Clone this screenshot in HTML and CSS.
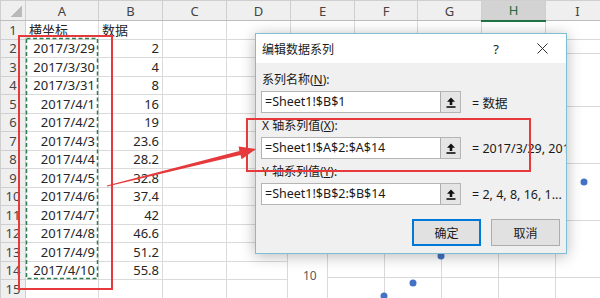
FILE: index.html
```html
<!DOCTYPE html>
<html lang="zh-CN">

<head>
  <meta charset="UTF-8">
  <meta name="viewport" content="width=device-width, initial-scale=1.0">
  <title>编辑数据系列</title>
  <link rel="stylesheet" href="styles.css">
</head>

<body>
  <div class="screen">
    <table class="sheet">
      <colgroup>
        <col class="c-head">
        <col class="c-a">
        <col class="c-std">
        <col class="c-std">
        <col class="c-std">
        <col class="c-std">
        <col class="c-g">
        <col class="c-std">
        <col class="c-std">
        <col class="c-std">
      </colgroup>
      <tr class="col-heads">
        <th class="corner"></th>
        <th>A</th>
        <th>B</th>
        <th>C</th>
        <th>D</th>
        <th>E</th>
        <th>F</th>
        <th>G</th>
        <th class="sel">H</th>
        <th>I</th>
      </tr>
      <tr><th>1</th><td>横坐标</td><td>数据</td><td></td><td></td><td></td><td></td><td></td><td></td><td></td></tr>
      <tr><th>2</th><td class="num">2017/3/29</td><td class="num">2</td><td></td><td></td><td></td><td></td><td></td><td></td><td></td></tr>
      <tr><th>3</th><td class="num">2017/3/30</td><td class="num">4</td><td></td><td></td><td></td><td></td><td></td><td></td><td></td></tr>
      <tr><th>4</th><td class="num">2017/3/31</td><td class="num">8</td><td></td><td></td><td></td><td></td><td></td><td></td><td></td></tr>
      <tr><th>5</th><td class="num">2017/4/1</td><td class="num">16</td><td></td><td></td><td></td><td></td><td></td><td></td><td></td></tr>
      <tr><th>6</th><td class="num">2017/4/2</td><td class="num">19</td><td></td><td></td><td></td><td></td><td></td><td></td><td></td></tr>
      <tr><th>7</th><td class="num">2017/4/3</td><td class="num">23.6</td><td></td><td></td><td></td><td></td><td></td><td></td><td></td></tr>
      <tr><th>8</th><td class="num">2017/4/4</td><td class="num">28.2</td><td></td><td></td><td></td><td></td><td></td><td></td><td></td></tr>
      <tr><th>9</th><td class="num">2017/4/5</td><td class="num">32.8</td><td></td><td></td><td></td><td></td><td></td><td></td><td></td></tr>
      <tr><th>10</th><td class="num">2017/4/6</td><td class="num">37.4</td><td></td><td></td><td></td><td></td><td></td><td></td><td></td></tr>
      <tr><th>11</th><td class="num">2017/4/7</td><td class="num">42</td><td></td><td></td><td></td><td></td><td></td><td></td><td></td></tr>
      <tr><th>12</th><td class="num">2017/4/8</td><td class="num">46.6</td><td></td><td></td><td></td><td></td><td></td><td></td><td></td></tr>
      <tr><th>13</th><td class="num">2017/4/9</td><td class="num">51.2</td><td></td><td></td><td></td><td></td><td></td><td></td><td></td></tr>
      <tr><th>14</th><td class="num">2017/4/10</td><td class="num">55.8</td><td></td><td></td><td></td><td></td><td></td><td></td><td></td></tr>
      <tr><th>15</th><td></td><td></td><td></td><td></td><td></td><td></td><td></td><td></td><td></td></tr>
    </table>

    <!-- 图表（被对话框挡住大半） -->
    <div class="chart">
      <svg class="chart-grid" width="320" height="250" viewBox="0 0 320 250">
        <g stroke="#d9d9d9" stroke-width="1">
          <line x1="39.5" y1="0" x2="39.5" y2="250" />
          <line x1="96.5" y1="0" x2="96.5" y2="250" />
          <line x1="153.5" y1="0" x2="153.5" y2="250" />
          <line x1="210.5" y1="0" x2="210.5" y2="250" />
          <line x1="267.5" y1="0" x2="267.5" y2="250" />
          <line x1="39" y1="52.5" x2="320" y2="52.5" />
          <line x1="39" y1="109.5" x2="320" y2="109.5" />
          <line x1="39" y1="166.5" x2="320" y2="166.5" />
          <line x1="39" y1="223.5" x2="320" y2="223.5" />
        </g>
        <g fill="#4472c4">
          <circle cx="96" cy="242" r="3.5" />
          <circle cx="125" cy="229" r="3.5" />
          <circle cx="153" cy="202" r="3.5" />
          <circle cx="296" cy="128" r="3.5" />
        </g>
      </svg>
      <span class="axis-label">10</span>
    </div>

    <div class="dialog">
      <div class="dlg-title">
        <span class="dlg-name">编辑数据系列</span>
        <span class="dlg-help">?</span>
        <span class="dlg-close">
          <svg width="11" height="11" viewBox="0 0 11 11">
            <path d="M0.5 0.5L10.5 10.5M10.5 0.5L0.5 10.5" stroke="#333" stroke-width="1" fill="none" />
          </svg>
        </span>
      </div>
      <div class="dlg-body">
        <div class="field">
          <label>系列名称(<u>N</u>):</label>
          <div class="field-row">
            <div class="ref-box">
              <span class="ref-text">=Sheet1!$B$1</span>
              <span class="ref-btn">
                <svg width="10" height="11" viewBox="0 0 10 11">
                  <path d="M5 0.5L9 4.8H6.3V8H3.7V4.8H1Z" fill="#111" />
                  <rect x="0.5" y="9.2" width="9" height="1.6" fill="#111" />
                </svg>
              </span>
            </div>
            <span class="ref-value">= 数据</span>
          </div>
        </div>
        <div class="field">
          <label>X 轴系列值(<u>X</u>):</label>
          <div class="field-row">
            <div class="ref-box">
              <span class="ref-text">=Sheet1!$A$2:$A$14</span>
              <span class="ref-btn">
                <svg width="10" height="11" viewBox="0 0 10 11">
                  <path d="M5 0.5L9 4.8H6.3V8H3.7V4.8H1Z" fill="#111" />
                  <rect x="0.5" y="9.2" width="9" height="1.6" fill="#111" />
                </svg>
              </span>
            </div>
            <span class="ref-value">= 2017/3/29, 201</span>
          </div>
        </div>
        <div class="field">
          <label>Y 轴系列值(<u>Y</u>):</label>
          <div class="field-row">
            <div class="ref-box">
              <span class="ref-text">=Sheet1!$B$2:$B$14</span>
              <span class="ref-btn">
                <svg width="10" height="11" viewBox="0 0 10 11">
                  <path d="M5 0.5L9 4.8H6.3V8H3.7V4.8H1Z" fill="#111" />
                  <rect x="0.5" y="9.2" width="9" height="1.6" fill="#111" />
                </svg>
              </span>
            </div>
            <span class="ref-value">= 2, 4, 8, 16, 1...</span>
          </div>
        </div>
        <div class="dlg-buttons">
          <button class="btn btn-default">确定</button>
          <button class="btn">取消</button>
        </div>
      </div>
    </div>

    <!-- 截图上的标注：选区虚线、红框和箭头 -->
    <svg class="marks" width="600" height="298" viewBox="0 0 600 298">
      <rect x="26.5" y="38.5" width="71" height="240" fill="none" stroke="#2f7d52" stroke-width="1.5" stroke-dasharray="4 2.5" />
      <rect x="19" y="36" width="93" height="253" fill="none" stroke="#e5393b" stroke-width="2" />
      <rect x="247" y="119" width="283" height="52" fill="none" stroke="#e5393b" stroke-width="2" />
      <polygon points="106.9,185.5 239.5,151.1 238.6,146.6 256,149 241.6,159.3 240.5,154.9 107.1,186.6" fill="#e5393b" />
    </svg>
  </div>
</body>

</html>
```

FILE: styles.css
```css
* {
  margin: 0;
  padding: 0;
  box-sizing: border-box;
}

body {
  width: 600px;
  height: 298px;
  overflow: hidden;
  background-color: #fff;
  font-family: "Noto Sans", "Noto Sans CJK SC", sans-serif;
  color: #222;
}

.screen {
  position: relative;
  width: 600px;
  height: 298px;
  overflow: hidden;
}

/* 表格 */
.sheet {
  border-collapse: collapse;
  table-layout: fixed;
  width: 609px;
  font-size: 13px;
}

.sheet .c-head {
  width: 25px;
}

.sheet .c-a {
  width: 73px;
}

.sheet .c-std {
  width: 64px;
}

.sheet .c-g {
  width: 63px;
}

.sheet tr {
  height: 18.5px;
}

.sheet .col-heads {
  height: 20px;
}

.sheet td {
  border: 1px solid #dadada;
  padding: 0 3px;
  white-space: nowrap;
  overflow: hidden;
  line-height: 16px;
  color: #262626;
}

.sheet td.num {
  text-align: right;
}

.sheet th {
  background-color: #efefef;
  border: 1px solid #cfcfcf;
  font-weight: normal;
  color: #444;
  text-align: center;
  line-height: 16px;
}

.sheet .col-heads th {
  border-bottom-color: #bdbdbd;
}

.sheet .corner {
  background: #efefef linear-gradient(135deg, transparent 50%, #b9b9b9 50%) no-repeat right 3px bottom 3px;
  background-size: 11px 11px;
}

.sheet th.sel {
  background-color: #d3d3d3;
  color: #1e6b3f;
  border-bottom: 2px solid #217346;
}

/* 图表 */
.chart {
  position: absolute;
  left: 287px;
  top: 53px;
  width: 320px;
  height: 250px;
  background-color: #fff;
  border-left: 1px solid #d9d9d9;
  border-top: 1px solid #d9d9d9;
}

.chart-grid {
  display: block;
}

.axis-label {
  position: absolute;
  left: 15px;
  top: 213px;
  font-size: 12px;
  color: #595959;
}

/* 对话框 */
.dialog {
  position: absolute;
  left: 255px;
  top: 33px;
  width: 312px;
  height: 221px;
  border: 1px solid #7fbdd2;
  background-color: #f0f0f0;
  box-shadow: 0 2px 14px rgba(0, 0, 0, 0.28);
  font-size: 12px;
  color: #1a1a1a;
  overflow: hidden;
}

.dlg-title {
  display: flex;
  align-items: center;
  height: 29px;
  background-color: #fff;
  padding-left: 6px;
}

.dlg-name {
  flex: 1;
  font-size: 12px;
}

.dlg-help {
  width: 20px;
  text-align: center;
  font-size: 13px;
  margin-right: 26px;
}

.dlg-close {
  display: flex;
  width: 20px;
  justify-content: center;
  margin-right: 14px;
}

.dlg-body {
  padding: 8px 6px 0 5px;
  display: flex;
  flex-direction: column;
  gap: 4px;
}

.field label {
  display: block;
  height: 18px;
  line-height: 18px;
  padding-left: 1px;
  margin-bottom: 2px;
}

.field-row {
  display: flex;
  align-items: center;
  margin-right: -6px;
}

.ref-box {
  display: flex;
  flex-shrink: 0;
  width: 200px;
  height: 22px;
  background-color: #fff;
  border: 1px solid #b5b5b5;
}

.ref-text {
  flex: 1;
  padding-left: 3px;
  line-height: 20px;
  font-size: 12.5px;
  white-space: nowrap;
  overflow: hidden;
}

.ref-btn {
  display: flex;
  align-items: center;
  justify-content: center;
  width: 20px;
  background-color: #e5e5e5;
  border-left: 1px solid #adadad;
}

.ref-value {
  margin-left: 11px;
  font-size: 12.5px;
  white-space: nowrap;
}

.dlg-buttons {
  display: flex;
  justify-content: flex-end;
  gap: 10px;
  margin-top: 10px;
}

.btn {
  width: 69px;
  height: 27px;
  background-color: #e1e1e1;
  border: 1px solid #adadad;
  font-family: "Noto Sans", "Noto Sans CJK SC", sans-serif;
  font-size: 12px;
  color: #1a1a1a;
}

.btn-default {
  border: 2px solid #0078d7;
}

/* 标注层 */
.marks {
  position: absolute;
  left: 0;
  top: 0;
  pointer-events: none;
}
```
